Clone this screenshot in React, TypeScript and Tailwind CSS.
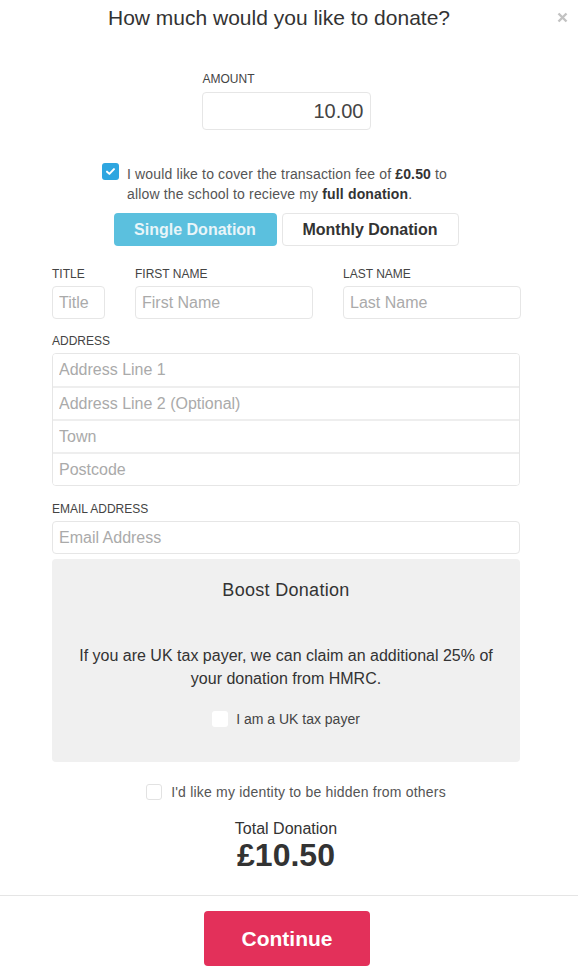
import React from "react";

function Label({ children }: { children: React.ReactNode }) {
  return <div className="h-[16px] text-[12px] leading-[16px] text-[#444] uppercase mb-[4px] mt-[1px]">{children}</div>;
}

function Field({ placeholder, className = "" }: { placeholder: string; className?: string }) {
  return (
    <input
      readOnly
      placeholder={placeholder}
      className={"block h-[33px] w-full rounded-[4px] border border-[#e6e6e6] bg-white px-[6px] text-[16px] text-[#444] outline-none placeholder:text-[#aaaaaa] " + className}
    />
  );
}

export default function App() {
  return (
    <div className="relative w-[578px] h-[976px] bg-white font-['Liberation_Sans',Arial,sans-serif] text-[#555]">
      {/* close */}
      <div className="absolute right-[10px] top-[12px] w-[11px] h-[11px]">
        <svg viewBox="0 0 11 11" width="11" height="11">
          <path d="M1.5 1.5 L9.5 9.5 M9.5 1.5 L1.5 9.5" stroke="#c2c2c2" strokeWidth="2.4" strokeLinecap="butt" />
        </svg>
      </div>

      {/* title */}
      <div className="pt-[4px] w-[558px] text-center text-[21px] leading-[28px] text-[#333]">
        How much would you like to donate?
      </div>

      <div className="ml-[52px] w-[468px]">
        {/* amount */}
        <div className="mt-[38px] flex justify-center">
          <div className="w-[169px]">
            <div className="h-[16px] text-[12px] leading-[16px] text-[#444] pl-[1px] mb-[5px] mt-[1px]">AMOUNT</div>
            <div className="h-[38px] rounded-[4px] border border-[#e6e6e6] flex items-center justify-end pr-[6px] text-[20px] text-[#444]">
              10.00
            </div>
          </div>
        </div>

        {/* fee checkbox */}
        <div className="mt-[34px] ml-[50px] flex items-start">
          <div className="mt-[-1px] w-[17px] h-[17px] rounded-[3px] bg-[#2ea6e0] flex items-center justify-center shrink-0">
            <svg viewBox="0 0 12 12" width="11" height="11">
              <path d="M2.2 6.2 L4.8 8.6 L9.8 3.4" stroke="white" strokeWidth="2.2" fill="none" strokeLinecap="round" strokeLinejoin="round" />
            </svg>
          </div>
          <div className="ml-[8px] text-[14px] leading-[20px] text-[#555] tracking-[0.15px]">
            I would like to cover the transaction fee of <b className="text-[#333]">£0.50</b> to
            <br />
            allow the school to recieve my <b className="text-[#333]">full donation</b>.
          </div>
        </div>

        {/* donation type */}
        <div className="mt-[9px] flex justify-center gap-[5px]">
          <div className="w-[163px] h-[33px] rounded-[4px] bg-[#5bc0de] flex items-center justify-center text-[16px] font-bold text-[#e9f5f9]">
            Single Donation
          </div>
          <div className="w-[177px] h-[33px] rounded-[4px] border border-[#e6e6e6] bg-white flex items-center justify-center text-[16px] font-bold text-[#333]">
            Monthly Donation
          </div>
        </div>

        {/* names */}
        <div className="mt-[19px] grid grid-cols-[53px_178px_178px] gap-x-[30px]">
          <div>
            <Label>Title</Label>
            <Field placeholder="Title" />
          </div>
          <div>
            <Label>First Name</Label>
            <Field placeholder="First Name" />
          </div>
          <div>
            <Label>Last Name</Label>
            <Field placeholder="Last Name" />
          </div>
        </div>

        {/* address */}
        <div className="mt-[14px]">
          <Label>Address</Label>
          <div className="rounded-[4px] border border-[#e6e6e6] overflow-hidden">
            {["Address Line 1", "Address Line 2 (Optional)", "Town", "Postcode"].map((p, i) => (
              <input
                key={p}
                readOnly
                placeholder={p}
                className={
                  "block w-full bg-white px-[6px] text-[16px] outline-none placeholder:text-[#aaaaaa] " +
                  (i === 0 ? "h-[32px]" : "h-[33px] border-t-2 border-[#eeeeee]")
                }
              />
            ))}
          </div>
        </div>

        {/* email */}
        <div className="mt-[15px]">
          <Label>Email Address</Label>
          <Field placeholder="Email Address" />
        </div>

        {/* boost */}
        <div className="mt-[5px] h-[203px] rounded-[4px] bg-[#f0f0f0] pt-[19px] px-[24px] text-center">
          <div className="text-[18px] leading-[24px] text-[#333] tracking-[0.3px]">Boost Donation</div>
          <div className="mt-[42px] text-[16px] leading-[23px] text-[#333]">
            If you are UK tax payer, we can claim an additional 25% of
            <br />
            your donation from HMRC.
          </div>
          <div className="mt-[19px] flex items-center justify-center">
            <div className="w-[16px] h-[16px] rounded-[3px] bg-white" />
            <div className="ml-[8px] text-[14px] leading-[20px] text-[#444]">I am a UK tax payer</div>
          </div>
        </div>

        {/* hidden identity */}
        <div className="mt-[20px] flex items-center justify-center pl-[20px]">
          <div className="w-[16px] h-[16px] rounded-[3px] bg-white border border-[#e2e2e2]" />
          <div className="ml-[9px] text-[14px] leading-[20px] text-[#555] tracking-[0.2px]">I'd like my identity to be hidden from others</div>
        </div>

        {/* total */}
        <div className="mt-[18px] text-center text-[16px] leading-[18px] text-[#333]">Total Donation</div>
        <div className="text-center text-[32px] leading-[34px] font-bold text-[#333]">£10.50</div>
      </div>

      {/* footer */}
      <div className="mt-[23px] border-t border-[#e5e5e5] pt-[15px] flex justify-center">
        <div className="ml-[-4px] w-[166px] h-[55px] rounded-[4px] bg-[#e3305a] flex items-center justify-center text-[21px] font-bold text-white">
          Continue
        </div>
      </div>
    </div>
  );
}
